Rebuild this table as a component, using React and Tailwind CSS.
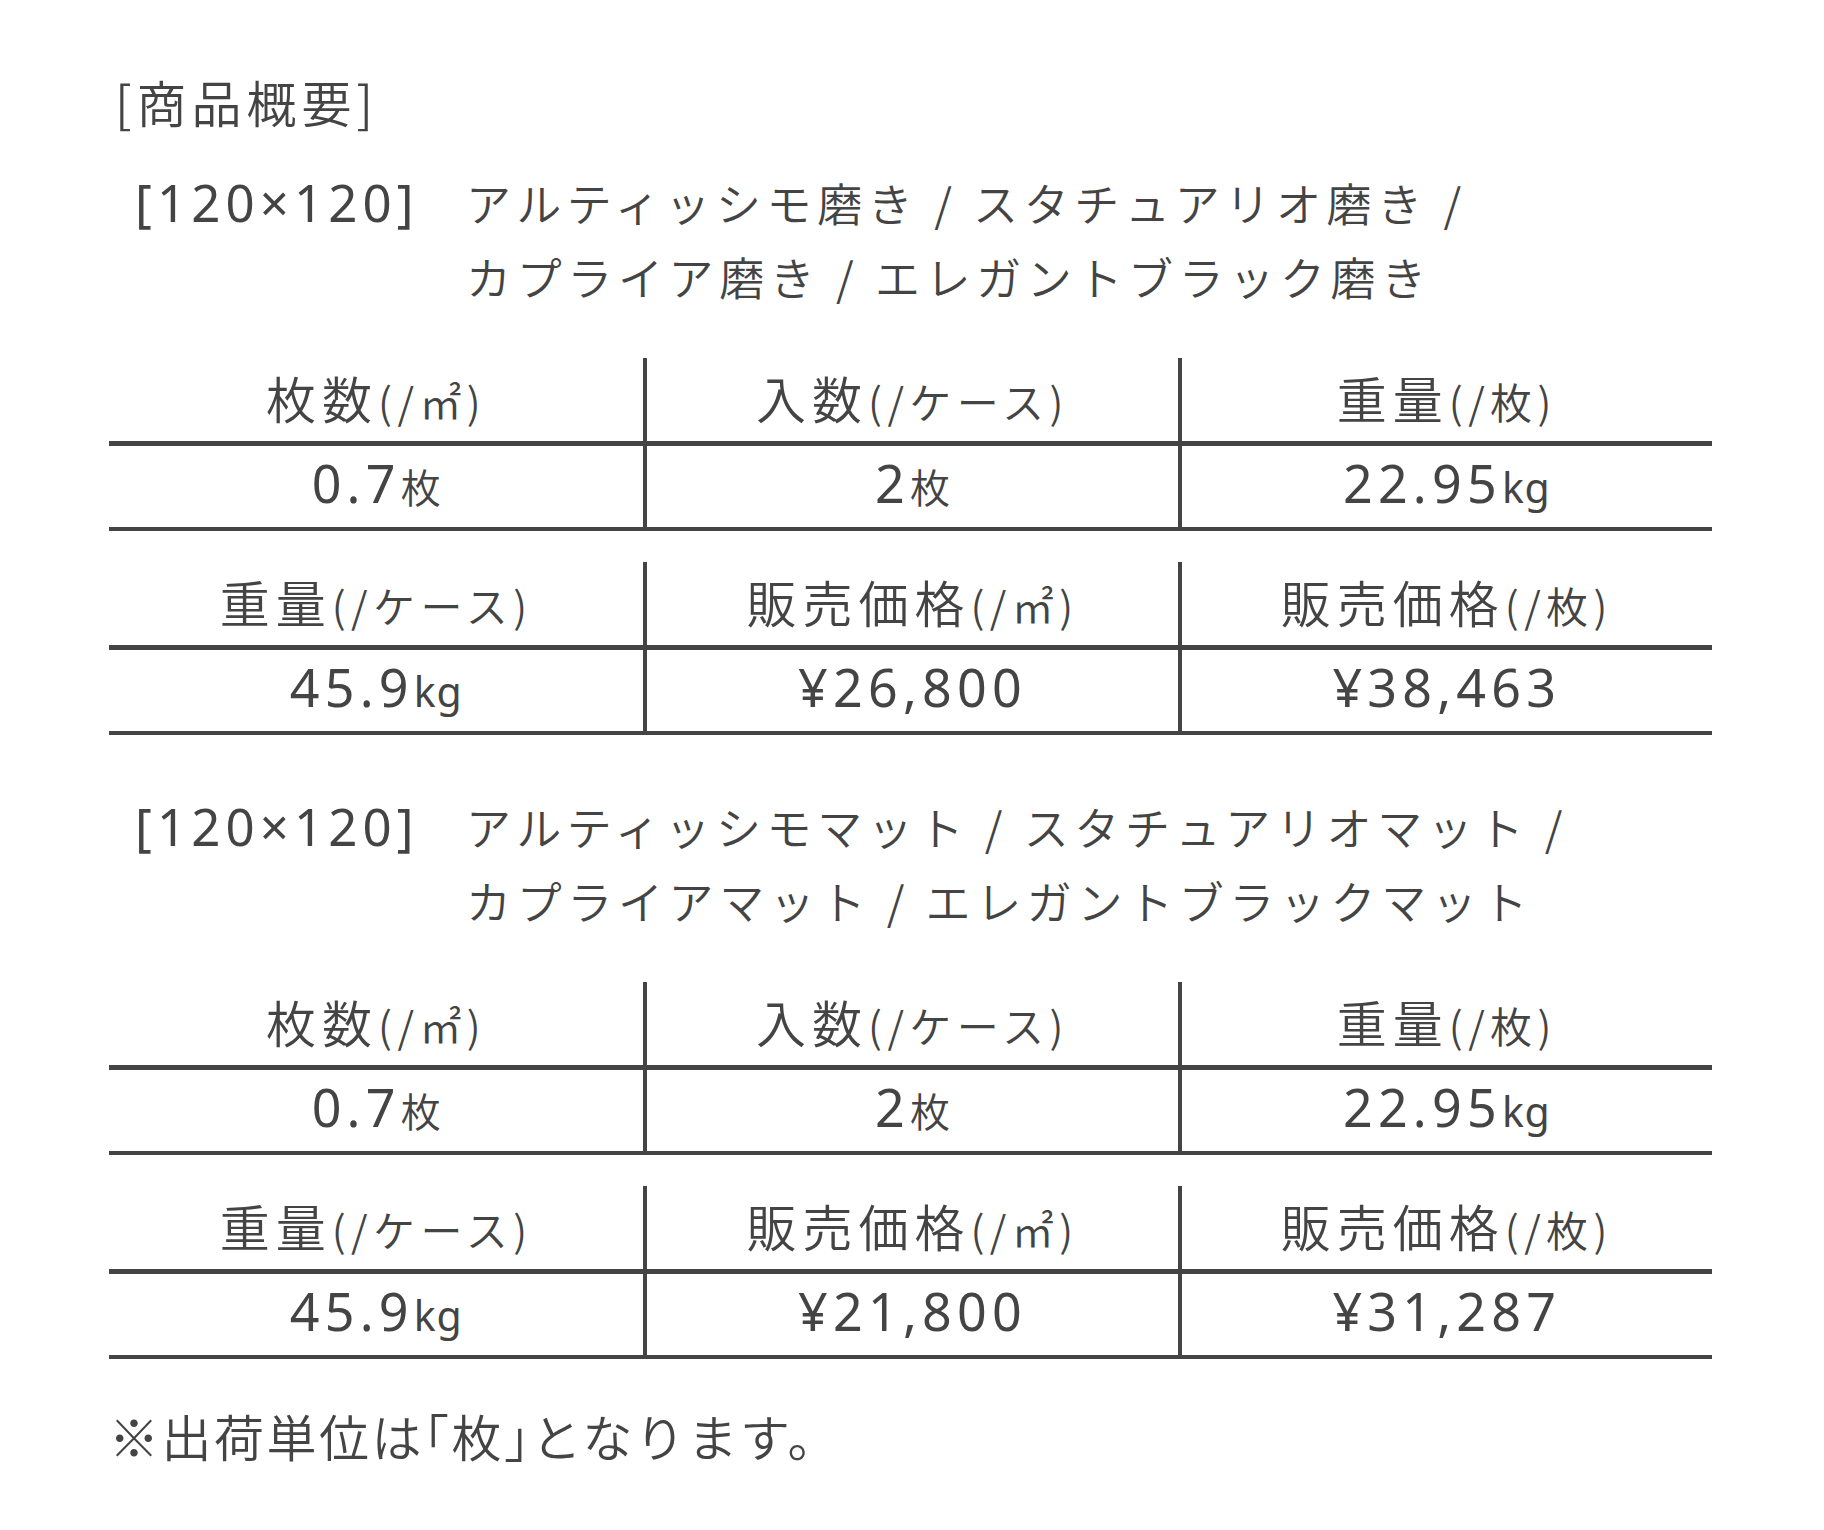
import React from "react";

const sections = [
  {
    lines: [
      "アルティッシモ磨き / スタチュアリオ磨き /",
      "カプライア磨き / エレガントブラック磨き",
    ],
    priceM2: "¥26,800",
    pricePiece: "¥38,463",
  },
  {
    lines: [
      "アルティッシモマット / スタチュアリオマット /",
      "カプライアマット / エレガントブラックマット",
    ],
    priceM2: "¥21,800",
    pricePiece: "¥31,287",
  },
];

const HeadCell = ({ main, sub, first }) => (
  <div
    className={`flex h-[83px] items-center justify-center pb-[6px] ${
      first ? "" : "border-l-4 border-[#444444]"
    }`}
  >
    <p className="text-[50px] leading-none">
      <span className="tracking-[0.12em]">{main}</span>
      <span className="text-[42px] tracking-[0.13em]">{sub}</span>
    </p>
  </div>
);

const ValueCell = ({ num, unit, first }) => (
  <div
    className={`flex h-[81px] items-center justify-center pb-[10px] ${
      first ? "" : "border-l-4 border-[#444444]"
    }`}
  >
    <p className="text-[52px] leading-none">
      <span className="font-['Noto_Sans',sans-serif] font-normal tracking-[0.1em]">
        {num}
      </span>
      {unit === "kg" && (
        <span className="font-['Noto_Sans',sans-serif] text-[41px] font-normal tracking-[0.02em]">
          kg
        </span>
      )}
      {unit === "枚" && <span className="text-[40px]">枚</span>}
    </p>
  </div>
);

const SpecTable = ({ heads, values, className = "" }) => (
  <div className={`border-b-4 border-[#444444] ${className}`}>
    <div className="grid grid-cols-3 border-b-[5px] border-[#444444]">
      {heads.map((h, i) => (
        <HeadCell key={i} main={h[0]} sub={h[1]} first={i === 0} />
      ))}
    </div>
    <div className="grid grid-cols-3">
      {values.map((v, i) => (
        <ValueCell key={i} num={v[0]} unit={v[1]} first={i === 0} />
      ))}
    </div>
  </div>
);

const Section = ({ data, className = "" }) => (
  <div className={className}>
    {/* size label + product names */}
    <div className="flex items-baseline">
      <div className="w-[357px] shrink-0 pl-[26px] font-['Noto_Sans',sans-serif] text-[51px] font-normal tracking-[0.1em]">
        [120×120]
      </div>
      <p className="text-[45px] leading-[74px] tracking-[0.125em]">
        {data.lines[0]}
        <br />
        {data.lines[1]}
      </p>
    </div>

    <SpecTable
      className="mt-[44px]"
      heads={[
        ["枚数", "(/㎡)"],
        ["入数", "(/ケース)"],
        ["重量", "(/枚)"],
      ]}
      values={[
        ["0.7", "枚"],
        ["2", "枚"],
        ["22.95", "kg"],
      ]}
    />
    <SpecTable
      className="mt-[31px]"
      heads={[
        ["重量", "(/ケース)"],
        ["販売価格", "(/㎡)"],
        ["販売価格", "(/枚)"],
      ]}
      values={[
        ["45.9", "kg"],
        [data.priceM2, ""],
        [data.pricePiece, ""],
      ]}
    />
  </div>
);

export default function App() {
  return (
    <div className="min-h-[1530px] w-[1824px] bg-white pl-[109px] pr-[112px] pt-[76px] font-['Noto_Sans_CJK_JP',sans-serif] font-[350] text-[#444444]">
      <h2 className="pl-[6px] text-[50px] font-[350] leading-[50px] tracking-[0.1em]">
        [商品概要]
      </h2>

      <Section data={sections[0]} className="mt-[38px]" />
      <Section data={sections[1]} className="mt-[53px]" />

      <p className="mt-[51px] text-[50px] leading-[50px] tracking-[0.05em]">
        ※出荷単位は<span className="[font-feature-settings:'halt']">「</span>枚
        <span className="[font-feature-settings:'halt']">」</span>となります。
      </p>
    </div>
  );
}
